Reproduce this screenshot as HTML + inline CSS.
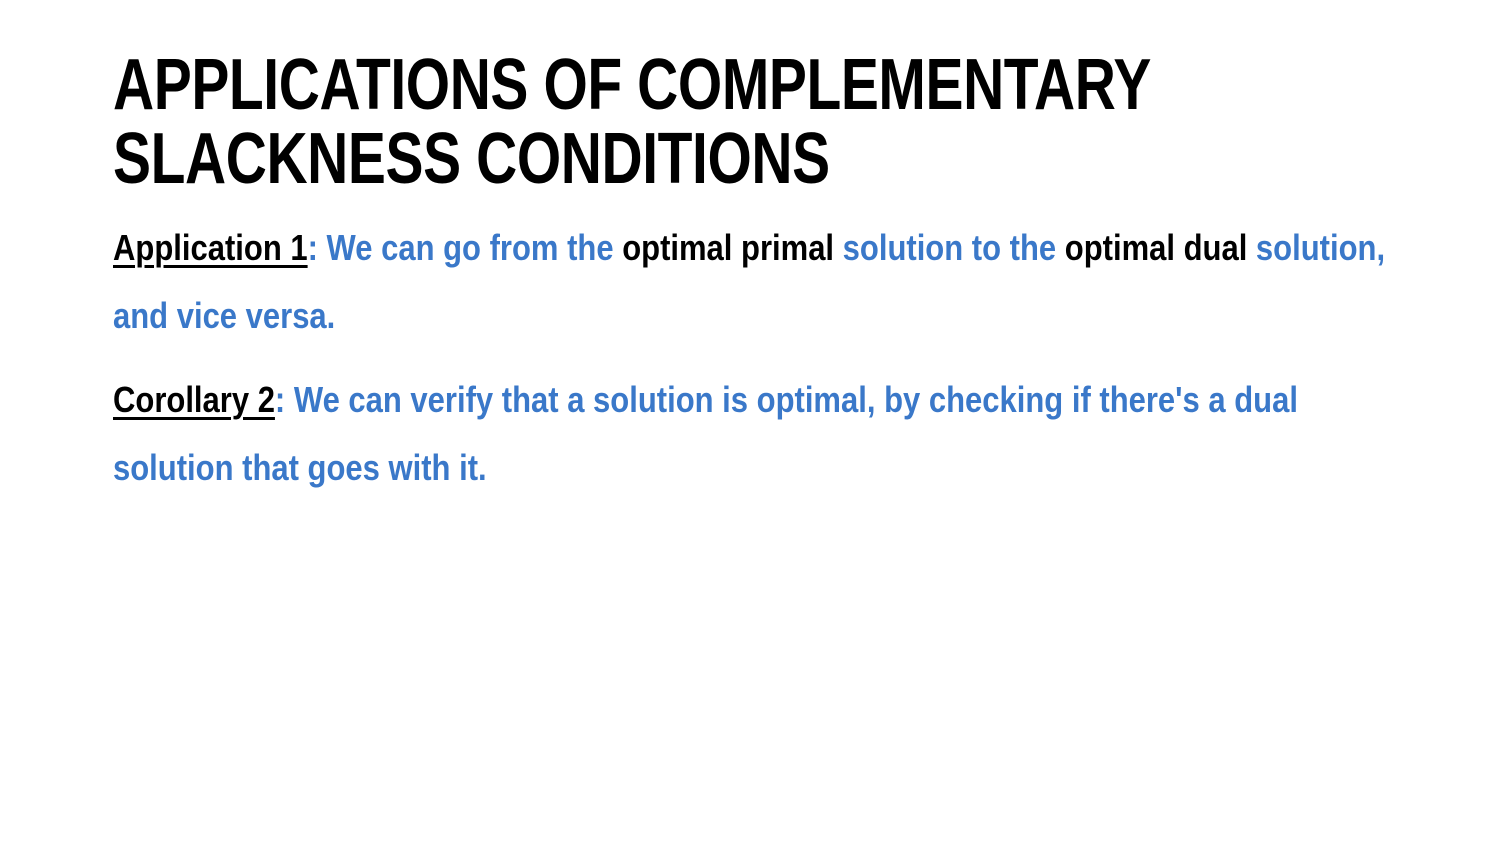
<!DOCTYPE html>
<html><head><meta charset="utf-8"><style>
html,body{margin:0;padding:0;background:#fff;width:1500px;height:844px;overflow:hidden}
.w{position:absolute;left:113px;transform-origin:0 0;transform:scaleX(0.861);white-space:nowrap;font-family:"Liberation Sans",Arial,sans-serif;font-weight:bold}
.t{transform:scaleX(0.791)}
h1{margin:0;font-size:72px;line-height:74px;color:#000;letter-spacing:-0.5px}
p{margin:0;font-size:36px;line-height:68px;color:#3a78c9}
.k{color:#000}
u{color:#000;text-decoration-thickness:3px;text-underline-offset:5px}
</style></head><body>
<div class="w t" style="top:48px"><h1>APPLICATIONS OF COMPLEMENTARY<br>SLACKNESS CONDITIONS</h1></div>
<div class="w" style="top:214px"><p><u>Application 1</u>: We can go from the <span class="k">optimal primal</span> solution to the <span class="k">optimal dual</span> solution,<br>and vice versa.</p></div>
<div class="w" style="top:366px"><p><u>Corollary 2</u>: We can verify that a solution is optimal, by checking if there's a dual<br>solution that goes with it.</p></div>
</body></html>
